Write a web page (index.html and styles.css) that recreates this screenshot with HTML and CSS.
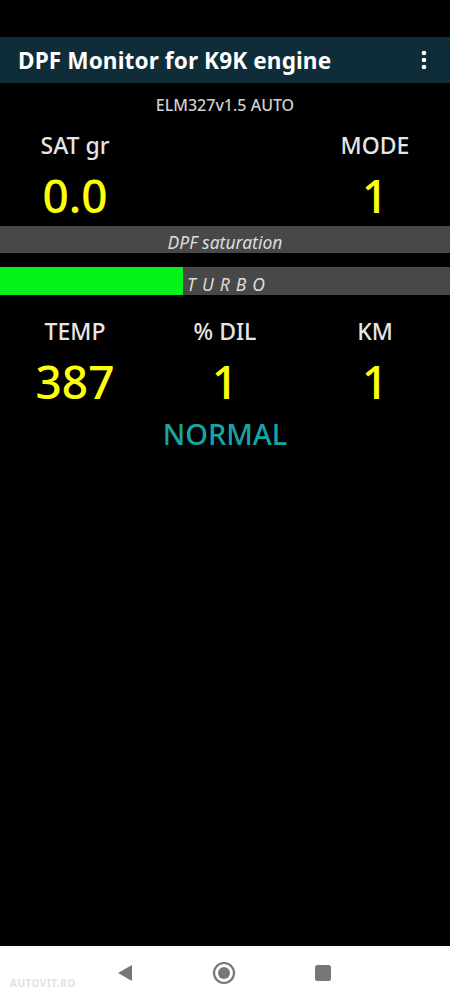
FILE: index.html
```html
<!DOCTYPE html>
<html lang="en">
<head>
<meta charset="utf-8">
<title>DPF Monitor for K9K engine</title>
<link rel="stylesheet" href="styles.css">
</head>
<body>
<div class="screen">
  <div class="status-bar"></div>
  <header class="app-bar">
    <h1 class="app-title">DPF Monitor for K9K engine</h1>
    <svg class="menu" width="6" height="20" viewBox="0 0 6 20"><circle cx="3" cy="3" r="2.3" fill="#fff"/><circle cx="3" cy="10" r="2.3" fill="#fff"/><circle cx="3" cy="17" r="2.3" fill="#fff"/></svg>
  </header>
  <main class="content">
    <div class="device">ELM327v1.5 AUTO</div>
    <div class="grid top-grid">
      <div class="cell"><div class="label">SAT gr</div><div class="value">0.0</div></div>
      <div class="cell"></div>
      <div class="cell"><div class="label">MODE</div><div class="value">1</div></div>
    </div>
    <div class="bar sat-bar"><span class="bar-text">DPF saturation</span></div>
    <div class="bar turbo-bar">
      <div class="fill" style="width:183px"></div>
      <span class="bar-text turbo-text">TURBO</span>
    </div>
    <div class="grid bottom-grid">
      <div class="cell"><div class="label">TEMP</div><div class="value">387</div></div>
      <div class="cell"><div class="label">% DIL</div><div class="value">1</div></div>
      <div class="cell"><div class="label">KM</div><div class="value">1</div></div>
    </div>
    <div class="state">NORMAL</div>
  </main>
  <nav class="nav-bar">
    <span class="watermark">AUTOVIT.RO</span>
    <svg class="nav-icon" width="18" height="20" viewBox="0 0 18 20"><path d="M2 10 L15 2.5 Q16 2 16 3 L16 17 Q16 18 15 17.5 Z" fill="#777"/></svg>
    <svg class="nav-icon" width="24" height="24" viewBox="0 0 24 24"><circle cx="12" cy="12" r="10" fill="none" stroke="#777" stroke-width="2.2"/><circle cx="12" cy="12" r="6" fill="#777"/></svg>
    <svg class="nav-icon" width="18" height="18" viewBox="0 0 18 18"><rect x="1" y="1" width="16" height="16" rx="2.5" fill="#777"/></svg>
  </nav>
</div>
</body>
</html>
```
FILE: styles.css
```css
* { box-sizing: border-box; margin: 0; padding: 0; }
html, body { background: #000; }
body { font-family: "Noto Sans", "Open Sans", sans-serif; }
.screen { width: 450px; height: 1000px; display: flex; flex-direction: column; background: #000; }
.status-bar { height: 37px; background: #000; flex: none; }
.app-bar { height: 46px; background: #0f2c39; display: flex; align-items: center; justify-content: space-between; padding: 0 23px 0 18px; flex: none; }
.app-title { color: #fff; font-size: 22.6px; font-weight: 700; letter-spacing: 0.1px; }
.menu { display: block; }
.content { flex: 1; display: flex; flex-direction: column; }
.device { text-align: center; color: #d0d0d0; font-size: 16px; font-weight: 500; margin-top: 12px; line-height: 20px; }
.grid { display: grid; grid-template-columns: repeat(3, 1fr); }
.cell { display: flex; flex-direction: column; align-items: center; }
.top-grid { margin-top: 15px; }
.label { color: #e6e6e6; font-size: 23px; font-weight: 500; line-height: 30px; }
.value { color: #ffff0a; font-size: 46px; font-weight: 500; line-height: 54px; margin-top: 8px; }
.bar { height: 27px; background: #484848; position: relative; display: flex; align-items: flex-end; justify-content: center; }
.sat-bar { margin-top: 4px; }
.turbo-bar { margin-top: 14px; height: 28px; }
.fill { position: absolute; left: 0; top: 0; bottom: 0; background: #05f21a; }
.bar-text { position: relative; color: #dcdcdc; font-style: italic; font-size: 17.5px; font-weight: 400; line-height: 22px; margin-bottom: 0; }
.turbo-text { letter-spacing: 6px; margin-left: 8px; }
.bottom-grid { margin-top: 21px; }
.state { text-align: center; color: #16a4a4; font-size: 29px; font-weight: 500; line-height: 34px; margin-top: 9px; }
.nav-bar { height: 54px; background: #fff; flex: none; display: flex; align-items: center; justify-content: center; gap: 78px; position: relative; padding-right: 2px; }
.watermark { position: absolute; left: 10px; top: 30px; font-size: 10px; color: #e2e2e2; font-weight: 700; letter-spacing: 0.5px; }
.nav-icon { display: block; }
```
